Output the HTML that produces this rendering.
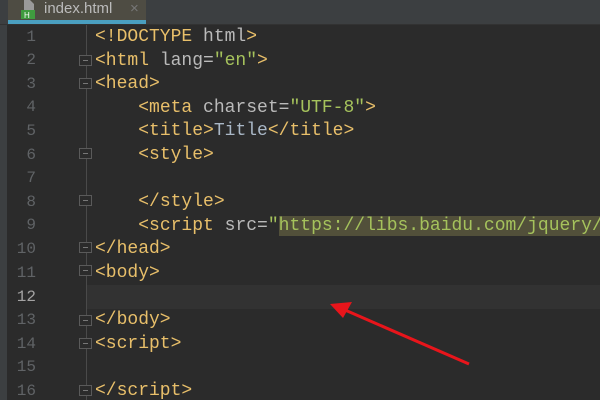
<!DOCTYPE html>
<html><head><style>
html,body{margin:0;width:600px;height:400px;overflow:hidden}
body{background:#2b2b2b;position:relative;font-family:"Liberation Mono",monospace}
.tabbar{position:absolute;left:0;top:0;width:600px;height:24px;background:#3c3f41;border-bottom:1px solid #323232}
.tab{position:absolute;left:8px;top:0;width:138px;height:20px;background:#4e4c43;border-bottom:4px solid #4a9fc0}
.tab span{position:absolute;left:36px;top:0px;font:15px "Liberation Sans",sans-serif;color:#bbbbbb}
.lstrip{position:absolute;left:0;top:25px;width:7px;height:375px;background:#3c3f41}
.ln{position:absolute;left:8px;width:28px;text-align:right;color:#606366;font-size:16px}
.wrap{position:absolute;left:0;top:0;width:600px;height:400px;overflow:hidden}
.code{position:absolute;left:95px;top:26px;font-size:18px;line-height:23.6px;white-space:pre;color:#a9b7c6}
.t{color:#e8bf6a}.a{color:#bababa}.s{color:#a5c25c}
.fold{position:absolute;left:86px;top:25px;width:1px;height:375px;background:#4a4a4a}
.cur{position:absolute;left:87px;top:285px;width:513px;height:24px;background:#323232}
.fm{position:absolute;left:79px;width:13px;height:11px;border:1px solid #5a5a5a;background:#2b2b2b;box-sizing:border-box}
.fm:after{content:"";position:absolute;left:3px;top:4px;width:5px;height:1px;background:#777}
</style></head><body><div class="wrap">
<div class="tabbar"><div class="tab">
<svg style="position:absolute;left:12px;top:0" width="18" height="20"><path d="M4 0h6l4 4v6H4z" fill="#9a9a9a"/><rect x="1" y="10" width="14" height="9" fill="#3f9b3f"/><text x="4" y="18" font-size="8" fill="#fff" font-family="Liberation Sans">H</text></svg>
<span>index.html</span><span style="left:122px;color:#777">×</span></div></div>
<div class="lstrip"></div>
<div class="cur"></div>
<div class="fold"></div>
<div class="fm" style="top:55px"></div><div class="fm" style="top:78px"></div>
<div class="fm" style="top:148px"></div><div class="fm" style="top:195px"></div>
<div class="fm" style="top:242px"></div><div class="fm" style="top:265px"></div>
<div class="fm" style="top:315px"></div><div class="fm" style="top:338px"></div>
<div class="fm" style="top:385px"></div>
<div class="ln" style="top:28px">1</div><div class="ln" style="top:51px">2</div><div class="ln" style="top:75px">3</div><div class="ln" style="top:98px">4</div><div class="ln" style="top:122px">5</div><div class="ln" style="top:146px">6</div><div class="ln" style="top:169px">7</div><div class="ln" style="top:193px">8</div><div class="ln" style="top:216px">9</div><div class="ln" style="top:240px">10</div><div class="ln" style="top:264px">11</div><div class="ln" style="top:288px;color:#a4a3a3">12</div><div class="ln" style="top:311px">13</div><div class="ln" style="top:335px">14</div><div class="ln" style="top:358px">15</div><div class="ln" style="top:382px">16</div>
<div class="code"><span class="t">&lt;!DOCTYPE </span><span class="a">html</span><span class="t">&gt;</span>
<span class="t">&lt;html </span><span class="a">lang=</span><span class="s">"en"</span><span class="t">&gt;</span>
<span class="t">&lt;head&gt;</span>
    <span class="t">&lt;meta </span><span class="a">charset=</span><span class="s">"UTF-8"</span><span class="t">&gt;</span>
    <span class="t">&lt;title&gt;</span>Title<span class="t">&lt;/title&gt;</span>
    <span class="t">&lt;style&gt;</span>

    <span class="t">&lt;/style&gt;</span>
    <span class="t">&lt;script </span><span class="a">src=</span><span class="s">"</span><span class="s" style="background:#52503a">https://libs.baidu.com/jquery/2</span>
<span class="t">&lt;/head&gt;</span>
<span class="t">&lt;body&gt;</span>

<span class="t">&lt;/body&gt;</span>
<span class="t">&lt;script&gt;</span>

<span class="t">&lt;/script&gt;</span></div>
<svg style="position:absolute;left:0;top:0" width="600" height="400"><line x1="469" y1="364" x2="345" y2="310" stroke="#e8151b" stroke-width="3"/><polygon points="330,304 352,302 343,318" fill="#e8151b"/></svg>
</div></body></html>
